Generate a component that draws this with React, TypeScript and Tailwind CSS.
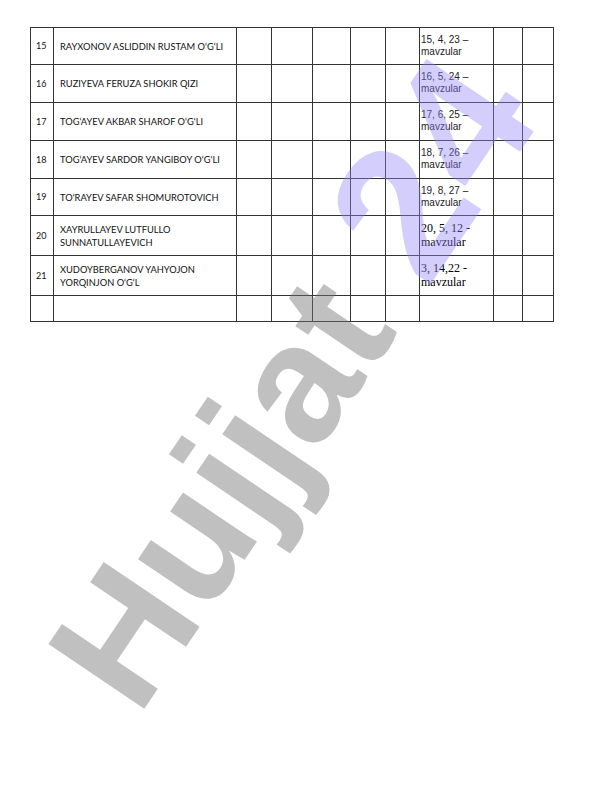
const rows = [
  { n: "15", name: ["RAYXONOV ASLIDDIN RUSTAM O‘G‘LI"], topics: ["15, 4, 23 –", "mavzular"], serif: false, h: "h-[36px]" },
  { n: "16", name: ["RUZIYEVA FERUZA SHOKIR QIZI"], topics: ["16, 5, 24 –", "mavzular"], serif: false, h: "h-[37px]" },
  { n: "17", name: ["TOG‘AYEV AKBAR SHAROF O‘G‘LI"], topics: ["17, 6, 25 –", "mavzular"], serif: false, h: "h-[37px]" },
  { n: "18", name: ["TOG‘AYEV SARDOR YANGIBOY O‘G‘LI"], topics: ["18, 7, 26 –", "mavzular"], serif: false, h: "h-[37px]" },
  { n: "19", name: ["TO‘RAYEV SAFAR SHOMUROTOVICH"], topics: ["19, 8, 27 –", "mavzular"], serif: false, h: "h-[36px]" },
  { n: "20", name: ["XAYRULLAYEV LUTFULLO", "SUNNATULLAYEVICH"], topics: ["20, 5, 12 -", "mavzular"], serif: true, h: "h-[39px]" },
  { n: "21", name: ["XUDOYBERGANOV YAHYOJON", "YORQINJON O‘G‘L"], topics: ["3, 14,22 -", "mavzular"], serif: true, h: "h-[39px]" },
  { n: "", name: [], topics: [], serif: false, h: "h-[25px]" },
]

export default function App() {
  return (
    <div className="relative w-[612px] h-[792px] overflow-hidden bg-white">
      {/* Table */}
      <div className="absolute left-[30px] top-[27px] w-[524px] grid grid-cols-[22px_182px_34px_40px_37px_34px_33px_73px_28px_30px] gap-px p-px bg-[#333]">
        {rows.map((r, i) => (
          <div key={i} className="contents">
            <div className={`${r.h} bg-white flex items-center pl-[5px] font-['Lato'] text-[9px] text-[#111]`}>{r.n}</div>
            <div className={`${r.h} bg-white flex flex-col justify-center pl-[6px] font-['Lato'] text-[9.3px] leading-[13px] text-[#111]`}>
              {r.name.map((l) => (
                <span key={l}>{l}</span>
              ))}
            </div>
            <div className={`${r.h} bg-white`} />
            <div className={`${r.h} bg-white`} />
            <div className={`${r.h} bg-white`} />
            <div className={`${r.h} bg-white`} />
            <div className={`${r.h} bg-white`} />
            {r.serif ? (
              <div className={`${r.h} bg-white flex flex-col pl-[1px] pt-[5px] font-['Liberation_Serif'] text-[12px] leading-[14px] text-black`}>
                {r.topics.map((l) => (
                  <span key={l}>{l}</span>
                ))}
              </div>
            ) : (
              <div className={`${r.h} bg-white flex flex-col pl-[1px] pt-[6px] font-['Liberation_Sans'] text-[10px] leading-[12px] text-[#222]`}>
                {r.topics.map((l) => (
                  <span key={l}>{l}</span>
                ))}
              </div>
            )}
            <div className={`${r.h} bg-white`} />
            <div className={`${r.h} bg-white`} />
          </div>
        ))}
      </div>

      {/* Watermark */}
      <div className="pointer-events-none absolute left-[138px] top-[559px] origin-[0_159px] rotate-[-56deg] whitespace-nowrap font-['Liberation_Sans'] text-[168px] font-bold leading-none">
        <span className="text-[rgba(115,115,115,0.45)]">Hujjat</span>
        <span className="ml-[50px] text-[188px] text-[rgba(147,132,250,0.4)]">24</span>
      </div>
    </div>
  )
}
